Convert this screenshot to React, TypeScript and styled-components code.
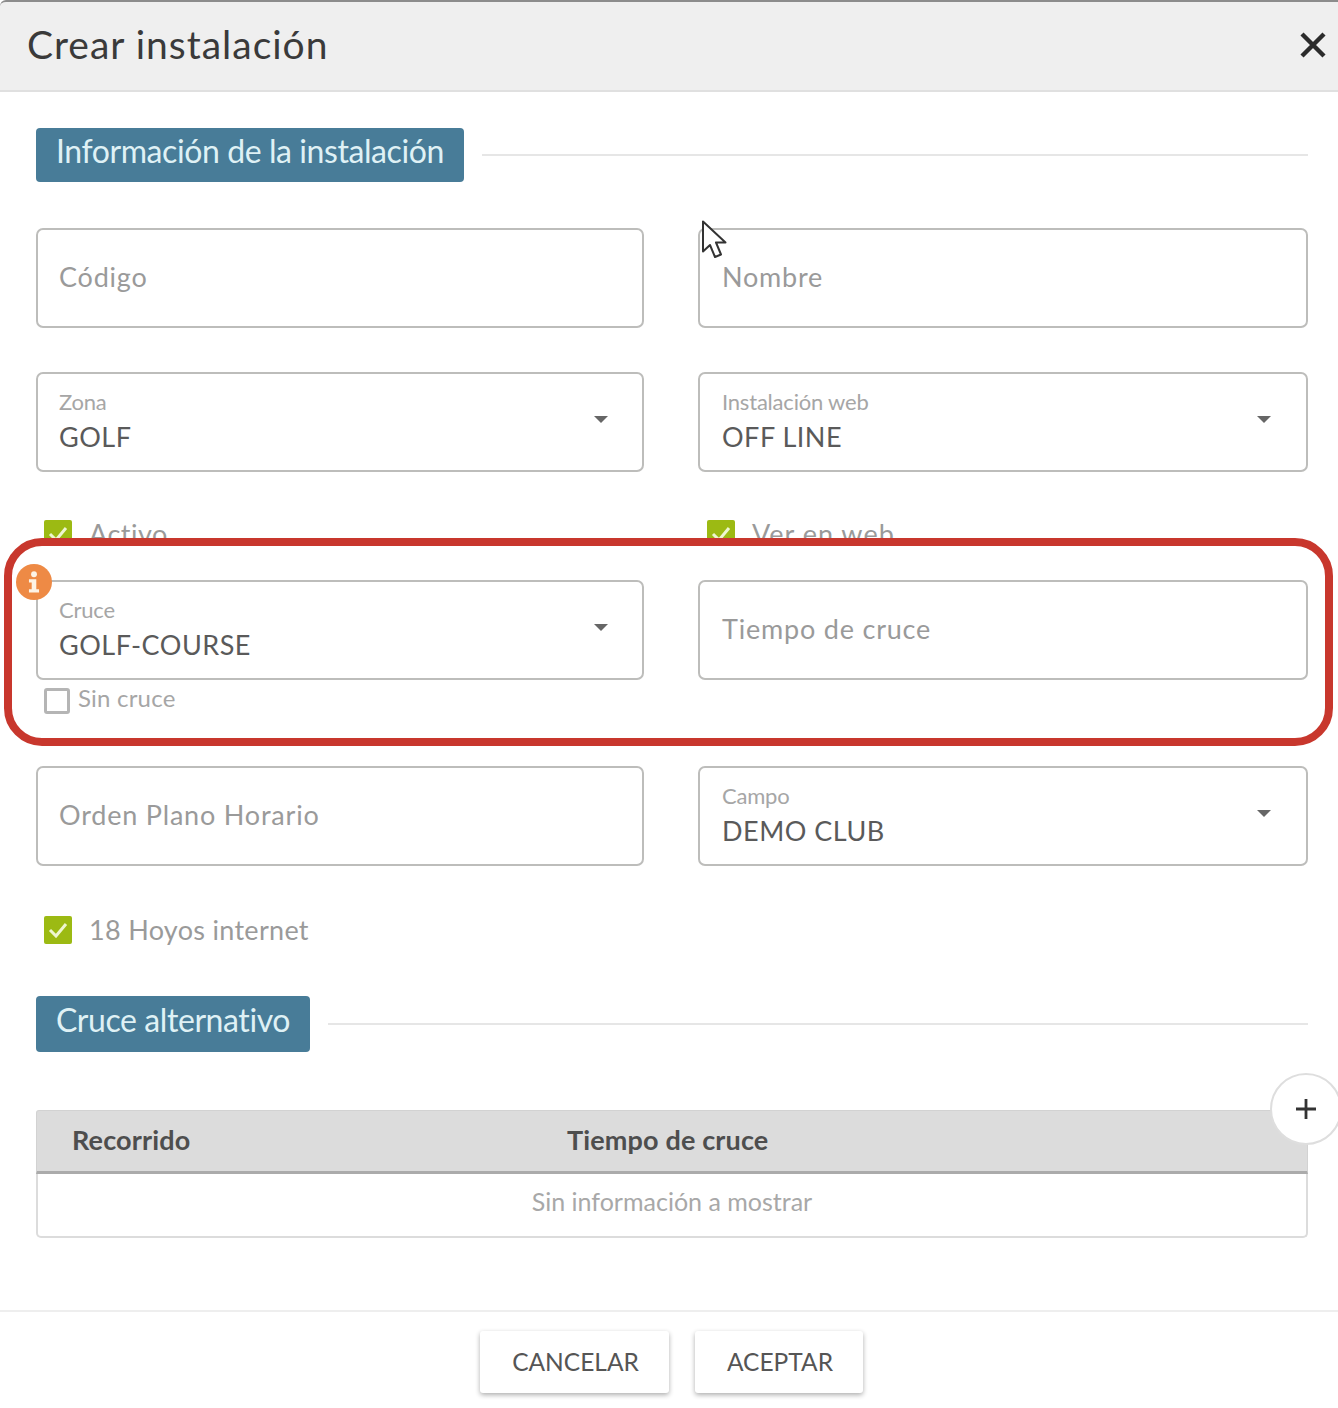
import React from "react";
import styled, { createGlobalStyle } from "styled-components";

const GlobalStyle = createGlobalStyle`
  html, body {
    margin: 0;
    padding: 0;
    background: #fff;
  }
  body {
    font-family: "Lato", "Open Sans", Arial, sans-serif;
    color: #555;
    overflow: hidden;
  }
`;

const Dialog = styled.div`
  position: relative;
  width: 1338px;
  height: 1408px;
  overflow: hidden;
  background: #fff;
`;

const Header = styled.header`
  display: flex;
  align-items: center;
  justify-content: space-between;
  box-sizing: border-box;
  height: 92px;
  padding: 0 10px 2px 27px;
  background: #efefef;
  border-top: 2px solid #8c8c8c;
  border-bottom: 2px solid #e0e0e0;
  border-top-left-radius: 6px;
`;

const Title = styled.h1`
  margin: -2px 0 0;
  font-size: 39px;
  font-weight: 400;
  color: #3a3a3a;
  letter-spacing: 1px;
`;

const CloseButton = styled.button`
  display: flex;
  padding: 0;
  border: 0;
  background: none;
  color: #2b2b2b;
`;

const Body = styled.main`
  padding: 36px 30px 0 36px;
`;

const SectionHead = styled.div`
  display: flex;
  align-items: center;
  gap: 18px;
`;

const SectionTag = styled.h2<{ $h: number }>`
  display: flex;
  align-items: center;
  box-sizing: border-box;
  height: ${(p) => p.$h}px;
  margin: 0;
  padding: 0 20px 10px;
  border-radius: 4px;
  background: #487c98;
  color: #dff1f5;
  font-size: 32px;
  font-weight: 400;
  letter-spacing: -0.42px;
  white-space: nowrap;
`;

const SectionLine = styled.div`
  flex: 1;
  height: 2px;
  background: #e6e6e6;
`;

const Columns = styled.div<{ $top?: number }>`
  display: grid;
  grid-template-columns: 608px 610px;
  column-gap: 54px;
  margin-top: ${(p) => p.$top ?? 0}px;
`;

const SectionRow = styled.div`
  margin-top: 52px;
`;

const Caret = styled.span`
  position: absolute;
  top: 42px;
  right: 34px;
  width: 0;
  height: 0;
  border-left: 7px solid transparent;
  border-right: 7px solid transparent;
  border-top: 7px solid #666;
`;

const FieldBox = styled.div`
  position: relative;
  display: flex;
  flex-direction: column;
  justify-content: center;
  box-sizing: border-box;
  height: 100px;
  padding: 0 21px 3px;
  border: 2px solid #bdbdbb;
  border-radius: 7px;
  background: #fff;

  &:nth-child(2) {
    padding-left: 22px;
  }
  &:nth-child(2) ${Caret} {
    right: 35px;
  }
`;

const Placeholder = styled.span`
  font-size: 27px;
  color: #9a9a9a;
  letter-spacing: 0.8px;
`;

const FloatLabel = styled.span`
  margin-top: 2px;
  font-size: 22px;
  line-height: 28px;
  color: #a6a6a6;
  letter-spacing: -0.2px;
`;

const Value = styled.span`
  margin-top: 3px;
  font-size: 27px;
  line-height: 36px;
  color: #5a5a5a;
  letter-spacing: 0.5px;
`;

const CheckRow = styled.div<{ $clip?: boolean }>`
  display: flex;
  align-items: ${(p) => (p.$clip ? "flex-start" : "center")};
  gap: 17px;
  height: ${(p) => (p.$clip ? "18px" : "28px")};
  padding-left: 8px;
  overflow: ${(p) => (p.$clip ? "hidden" : "visible")};

  &:nth-child(2) {
    padding-left: 9px;
  }
`;

const CheckTick = styled.span`
  display: flex;
  flex: none;
  align-items: center;
  justify-content: center;
  box-sizing: border-box;
  width: 28px;
  height: 28px;
  border-radius: 2px;
  background: #9cba13;
`;

const CheckEmpty = styled.span`
  flex: none;
  box-sizing: border-box;
  width: 26px;
  height: 26px;
  border: 3px solid #b5b5b5;
  border-radius: 3px;
`;

const CheckLabel = styled.span<{ $track?: number }>`
  font-size: 27px;
  line-height: 28px;
  color: #9a9a9a;
  letter-spacing: ${(p) => p.$track ?? 0.3}px;
`;

const SubLabel = styled.span`
  font-size: 24px;
  line-height: 20px;
  color: #a6a6a6;
  letter-spacing: 0.2px;
`;

const Highlight = styled.section`
  position: relative;
  box-sizing: border-box;
  height: 208px;
  margin: 0 -25px 20px -32px;
  padding: 34px 17px 0 24px;
  border: 8px solid #c8372d;
  border-radius: 38px;
  background: #fff;
`;

const SubCheck = styled.div`
  display: flex;
  align-items: flex-start;
  gap: 8px;
  margin-top: 8px;
  padding-left: 8px;
`;

const InfoBadge = styled.span`
  position: absolute;
  z-index: 1;
  top: 18px;
  left: 4px;
  display: flex;
  align-items: center;
  justify-content: center;
  width: 36px;
  height: 36px;
  border-radius: 50%;
  background: #ee8a45;
  color: #fdf3e6;
`;

const Table = styled.div`
  position: relative;
  margin-top: 58px;
`;

const TableHead = styled.div`
  display: flex;
  align-items: center;
  box-sizing: border-box;
  height: 64px;
  padding: 0 35px 3px;
  background: #dcdcdc;
  border: 1px solid #d2d2d2;
  border-bottom: 3px solid #ababab;
  border-radius: 3px 3px 0 0;
`;

const HeadCell = styled.span<{ $w: number }>`
  width: ${(p) => p.$w}px;
  font-size: 27px;
  font-weight: 700;
  color: #4e4e4e;
  letter-spacing: 0.15px;
`;

const TableBody = styled.div`
  display: flex;
  align-items: center;
  justify-content: center;
  box-sizing: border-box;
  height: 64px;
  padding-bottom: 8px;
  border: 2px solid #dcdcdc;
  border-top: 0;
  border-radius: 0 0 5px 5px;
  font-size: 25px;
  color: #a8a8a8;
`;

const AddButton = styled.button`
  position: absolute;
  top: -37px;
  right: -34px;
  display: flex;
  align-items: center;
  justify-content: center;
  box-sizing: border-box;
  width: 72px;
  height: 72px;
  padding: 0;
  border: 2px solid #dedede;
  border-radius: 50%;
  background: #fff;
  color: #333;
`;

const Footer = styled.footer`
  display: flex;
  justify-content: center;
  gap: 26px;
  margin-top: 72px;
  padding: 19px 0 0 5px;
  border-top: 2px solid #eeeeee;
`;

const FooterButton = styled.button<{ $w: number }>`
  box-sizing: border-box;
  width: ${(p) => p.$w}px;
  height: 62px;
  padding: 0 0 2px 2px;
  border: 0;
  border-radius: 3px;
  background: #fff;
  box-shadow: 0 2px 5px rgba(0, 0, 0, 0.32);
  font-family: inherit;
  font-size: 24.500px;
  color: #555;
`;

const Pointer = styled.svg`
  position: absolute;
  top: 220px;
  left: 701px;
`;

function Tick() {
  return (
    <svg width="20" height="16" viewBox="0 0 20 16" fill="none">
      <path d="M2 8l6 6L18 2" stroke="#eef6d0" strokeWidth="3" />
    </svg>
  );
}

function Checked({ label, clip, track }: { label: string; clip?: boolean; track?: number }) {
  return (
    <CheckRow $clip={clip}>
      <CheckTick>
        <Tick />
      </CheckTick>
      <CheckLabel $track={track}>{label}</CheckLabel>
    </CheckRow>
  );
}

function SelectField({ label, value }: { label: string; value: string }) {
  return (
    <FieldBox>
      <FloatLabel>{label}</FloatLabel>
      <Value>{value}</Value>
      <Caret />
    </FieldBox>
  );
}

function InputField({ placeholder }: { placeholder: string }) {
  return (
    <FieldBox>
      <Placeholder>{placeholder}</Placeholder>
    </FieldBox>
  );
}

export default function App() {
  return (
    <Dialog>
      <GlobalStyle />
      <Header>
        <Title>Crear instalación</Title>
        <CloseButton>
          <svg width="30" height="30" viewBox="0 0 30 30" fill="none">
            <path d="M4 4l22 22M26 4L4 26" stroke="currentColor" strokeWidth="4.400" />
          </svg>
        </CloseButton>
      </Header>
      <Body>
        <SectionHead>
          <SectionTag $h={54}>Información de la instalación</SectionTag>
          <SectionLine />
        </SectionHead>

        <Columns $top={46}>
          <InputField placeholder="Código" />
          <InputField placeholder="Nombre" />
        </Columns>
        <Columns $top={44}>
          <SelectField label="Zona" value="GOLF" />
          <SelectField label="Instalación web" value="OFF LINE" />
        </Columns>
        <Columns $top={48}>
          <Checked label="Activo" clip track={0.5} />
          <Checked label="Ver en web" clip track={1} />
        </Columns>

        <Highlight>
          <InfoBadge>
            <svg width="14" height="22" viewBox="0 0 14 24" fill="currentColor">
              <circle cx="7" cy="3.500" r="3.200" />
              <path d="M1.500 9h8v11h3v3.500h-11V20h3v-7.500h-3z" />
            </svg>
          </InfoBadge>
          <Columns>
            <div>
              <SelectField label="Cruce" value="GOLF-COURSE" />
              <SubCheck>
                <CheckEmpty />
                <SubLabel>Sin cruce</SubLabel>
              </SubCheck>
            </div>
            <InputField placeholder="Tiempo de cruce" />
          </Columns>
        </Highlight>

        <Columns>
          <InputField placeholder="Orden Plano Horario" />
          <SelectField label="Campo" value="DEMO CLUB" />
        </Columns>
        <Columns $top={50}>
          <Checked label="18 Hoyos internet" />
        </Columns>

        <SectionRow>
          <SectionHead>
            <SectionTag $h={56}>Cruce alternativo</SectionTag>
            <SectionLine />
          </SectionHead>
        </SectionRow>

        <Table>
          <TableHead>
            <HeadCell $w={495}>Recorrido</HeadCell>
            <HeadCell $w={300}>Tiempo de cruce</HeadCell>
          </TableHead>
          <TableBody>Sin información a mostrar</TableBody>
          <AddButton>
            <svg width="24" height="24" viewBox="0 0 24 24" fill="none">
              <path d="M12 2v20M2 12h20" stroke="currentColor" strokeWidth="2.800" />
            </svg>
          </AddButton>
        </Table>
      </Body>
      <Footer>
        <FooterButton $w={189}>CANCELAR</FooterButton>
        <FooterButton $w={168}>ACEPTAR</FooterButton>
      </Footer>
      <Pointer width="26" height="40" viewBox="0 0 26 40" fill="#fff">
        <path
          d="M2 1.500v30l7-6.500 5 12 6-2.500-5-12h9.500z"
          stroke="#333"
          strokeWidth="2"
          strokeLinejoin="round"
        />
      </Pointer>
    </Dialog>
  );
}
